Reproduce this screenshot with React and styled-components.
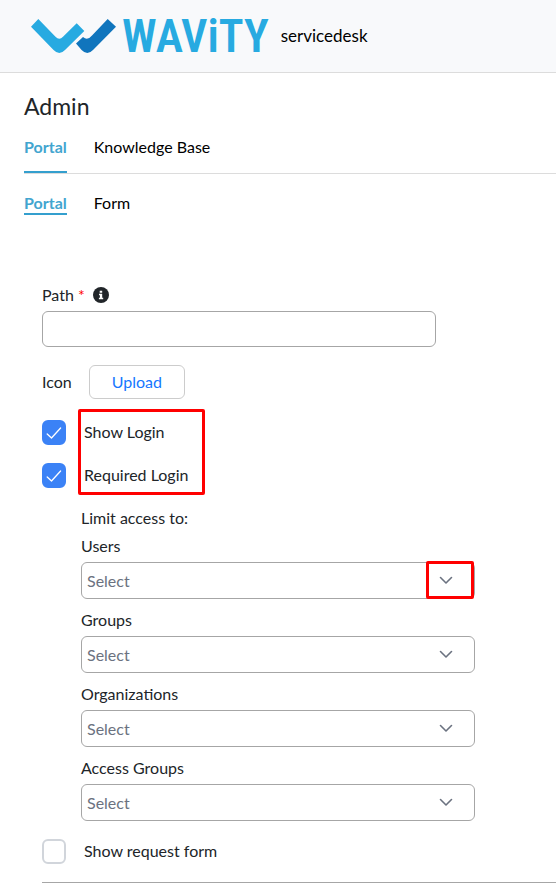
import React, { useState } from 'react'
import styled, { createGlobalStyle } from 'styled-components'

const limits = ['Users', 'Groups', 'Organizations', 'Access Groups']

const App = () => {
    const [checks, setChecks] = useState({ login: true, required: true, request: false })

    const toggle = (key) => setChecks({ ...checks, [key]: !checks[key] })

    return (
        <>
            <GlobalStyle />
            <Header>
                <Brand href="/">
                    <LogoMark viewBox="0 0 85 34" aria-hidden="true">
                        <path fill="#27aae1" d="M0 7.700L7.300 0L24.500 17.800Q28.300 21.500 32 17.800L45.700 4.300L53.300 12L34 31Q28.300 37 22.600 31Z" />
                        <path fill="#1075bd" d="M45 24.500L52 18Q56.500 22 61 16.500L76.700 0L85 7.700L62 31Q56.300 37 50.600 31Z" />
                    </LogoMark>
                    <Wordmark>WAViTY</Wordmark>
                </Brand>
                <Desk>servicedesk</Desk>
            </Header>

            <Main>
                <Title>Admin</Title>
                <Tabs>
                    <Tab href="#portal" $active>Portal</Tab>
                    <Tab href="#knowledge">Knowledge Base</Tab>
                </Tabs>
                <SubTabs>
                    <SubTab href="#portal" $active>Portal</SubTab>
                    <SubTab href="#form">Form</SubTab>
                </SubTabs>

                <Form>
                    <Field>
                        <PathLabel htmlFor="path">
                            Path <Star>*</Star>
                            <InfoIcon viewBox="0 0 16 16" aria-hidden="true">
                                <circle cx="8" cy="8" r="8" fill="#212529" />
                                <path fill="#fff" d="M6.700 3.700h2.500v2H6.700zM6 6.700h3.200v4h1v1.500H5.900v-1.500h1V8.200H6z" />
                            </InfoIcon>
                        </PathLabel>
                        <TextInput id="path" type="text" />
                    </Field>

                    <UploadRow>
                        <span>Icon</span>
                        <UploadButton type="button">Upload</UploadButton>
                    </UploadRow>

                    <LoginChecks>
                        <Check label="Show Login" checked={checks.login} onChange={() => toggle('login')} />
                        <Check label="Required Login" checked={checks.required} onChange={() => toggle('required')} />
                        <LoginMark />
                    </LoginChecks>

                    <Limits>
                        <p>Limit access to:</p>
                        {limits.map((name, i) => (
                            <Dropdown key={name} label={name} marked={i === 0} />
                        ))}
                    </Limits>

                    <Check label="Show request form" checked={checks.request} onChange={() => toggle('request')} />
                    <Divider />
                </Form>
            </Main>
        </>
    )
}

export default App;

const Check = ({ label, checked, onChange }) => (
    <CheckLabel>
        <CheckBox>
            <input type="checkbox" checked={checked} onChange={onChange} />
            {checked && (
                <svg viewBox="0 0 16 16" aria-hidden="true">
                    <path d="M1.200 9L5.500 13L14.600 3" fill="none" stroke="#fff" strokeWidth="1.300" strokeLinecap="round" strokeLinejoin="round" />
                </svg>
            )}
        </CheckBox>
        {label}
    </CheckLabel>
)

const Dropdown = ({ label, marked }) => {
    const id = label.toLowerCase().replace(' ', '-')

    return (
        <Field>
            <label htmlFor={id}>{label}</label>
            <SelectWrap>
                <select id={id}>
                    <option>Select</option>
                </select>
                <svg viewBox="0 0 14 14" aria-hidden="true">
                    <path d="M1.500 3.500L7 9L12.500 3.500" fill="none" stroke="#6b7280" strokeWidth="1.600" strokeLinecap="round" strokeLinejoin="round" />
                </svg>
                {marked && <ArrowMark />}
            </SelectWrap>
        </Field>
    )
}

const GlobalStyle = createGlobalStyle`
    * {
        box-sizing: border-box;
    }

    body {
        margin: 0;
        background: #fff;
        color: #212529;
        font-family: Lato, "Liberation Sans", sans-serif;
        font-size: 16px;
        line-height: 24px;
    }

    h1, p {
        margin: 0;
    }

    a {
        text-decoration: none;
    }

    input, button, select {
        font: inherit;
    }
`

const Header = styled.header`
    display: flex;
    align-items: center;
    gap: 12px;
    height: 73px;
    padding-left: 31px;
    background: #f8f9fb;
    border-bottom: 1px solid #dcdcdc;
    color: #000;
`

const Brand = styled.a`
    display: flex;
    align-items: center;
    gap: 6px;
`

const LogoMark = styled.svg`
    width: 85px;
    height: 34px;
`

const Wordmark = styled.span`
    color: #27aae1;
    font-family: "Roboto Condensed", Roboto, "Liberation Sans", sans-serif;
    font-size: 46px;
    font-weight: 600;
    line-height: 48px;
`

const Desk = styled.span`
    font-size: 17px;
`

const Main = styled.main`
    padding: 17px 0 2px 24px;
`

const Title = styled.h1`
    font-size: 23px;
    font-weight: 400;
    line-height: 32px;
`

const Tabs = styled.nav`
    display: flex;
    gap: 27px;
    margin-top: 13px;
    border-bottom: 1px solid #dcdcdc;
`

const Tab = styled.a`
    padding-bottom: 12px;
    border-bottom: 2px solid ${({ $active }) => ($active ? '#349fce' : 'transparent')};
    color: ${({ $active }) => ($active ? '#42a5cf' : '#000')};
    font-weight: ${({ $active }) => ($active ? 700 : 400)};
`

const SubTabs = styled(Tabs)`
    margin-top: 19px;
    border-bottom: none;
`

const SubTab = styled(Tab)`
    padding-bottom: 0;
    line-height: 20px;
`

const Form = styled.form`
    display: flex;
    flex-direction: column;
    gap: 18px;
    padding: 68px 0 0 18px;
`

const Field = styled.div`
    display: flex;
    flex-direction: column;
    gap: 4px;
    max-width: 394px;
`

const PathLabel = styled.label`
    display: flex;
    align-items: center;
    gap: 4px;
`

const Star = styled.span`
    color: #f00;
`

const InfoIcon = styled.svg`
    width: 16px;
    height: 16px;
    margin-left: 4px;
`

const TextInput = styled.input`
    width: 100%;
    height: 36px;
    padding: 0 8px;
    border: 1px solid #a6a6a6;
    border-radius: 6px;
`

const UploadRow = styled.div`
    display: flex;
    align-items: center;
    gap: 17px;
`

const UploadButton = styled.button`
    height: 34px;
    padding: 0 22px;
    background: #fff;
    border: 1px solid #ccc;
    border-radius: 6px;
    color: #1677ff;
    cursor: pointer;
`

const LoginChecks = styled.div`
    position: relative;
    display: flex;
    flex-direction: column;
    gap: 18px;
    margin-top: 3px;
`

const CheckLabel = styled.label`
    display: flex;
    align-items: flex-start;
    gap: 18px;
`

const CheckBox = styled.span`
    display: grid;
    place-items: center;

    input, svg {
        grid-area: 1 / 1;
    }

    input {
        appearance: none;
        width: 24px;
        height: 25px;
        margin: 0;
        border: 2px solid #d1d5db;
        border-radius: 6px;
    }

    input:checked {
        background: #3b82f6;
        border-color: #3b82f6;
    }

    svg {
        width: 16px;
        height: 16px;
        pointer-events: none;
    }
`

const Limits = styled.div`
    display: flex;
    flex-direction: column;
    gap: 9px;
    padding-left: 39px;

    p {
        margin-bottom: -5px;
    }
`

const SelectWrap = styled.div`
    position: relative;
    display: grid;
    align-items: center;

    select, svg {
        grid-area: 1 / 1;
    }

    select {
        appearance: none;
        width: 100%;
        height: 37px;
        padding: 0 48px 0 5px;
        background: #fff;
        border: 1px solid #a6a6a6;
        border-radius: 6px;
        color: #6b7280;
    }

    svg {
        justify-self: end;
        width: 14px;
        height: 14px;
        margin-right: 22px;
        pointer-events: none;
    }
`

const Mark = styled.div`
    position: absolute;
    border: 3px solid #f00;
    border-radius: 2px;
    pointer-events: none;
`

const LoginMark = styled(Mark)`
    top: -11px;
    bottom: -7px;
    left: 36px;
    width: 127px;
`

const ArrowMark = styled(Mark)`
    top: -1px;
    right: 1px;
    bottom: 0;
    width: 48px;
`

const Divider = styled.hr`
    width: 100%;
    margin: 0;
    border: none;
    border-top: 1px solid #a6a6a6;
`
